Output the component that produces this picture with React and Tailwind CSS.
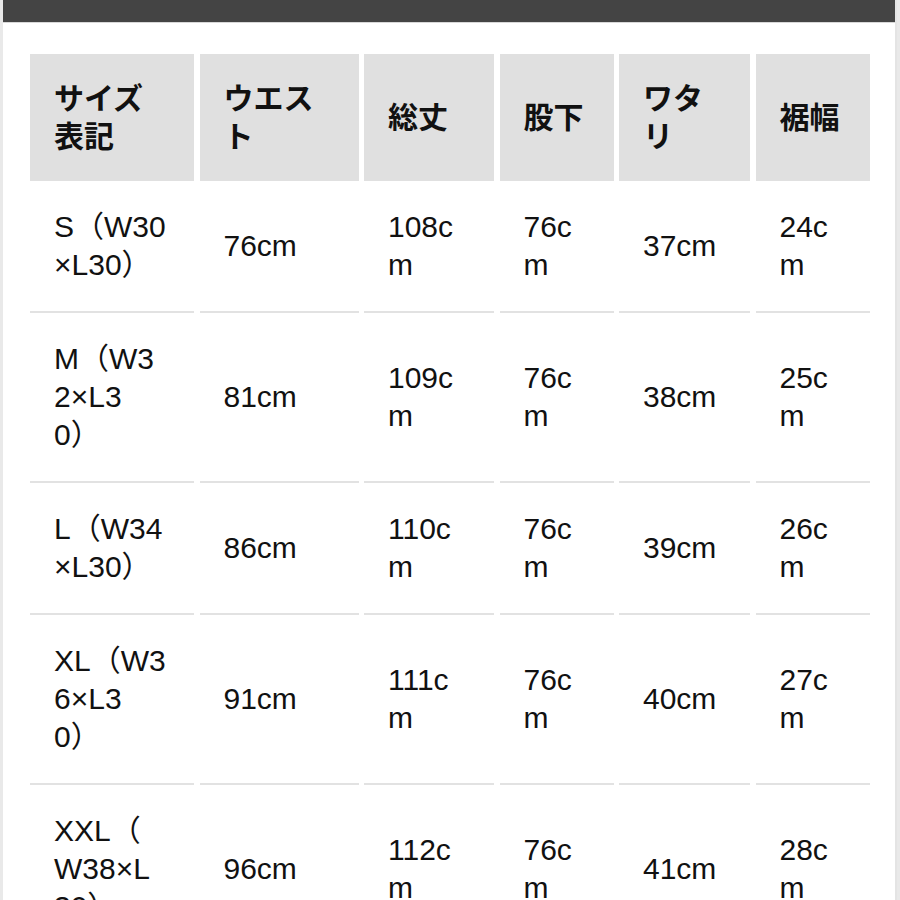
import React from "react";

const widths = ["w-[164px]", "w-[159px]", "w-[130px]", "w-[114px]", "w-[131px]", "w-[114px]"];

const header = [
  ["サイズ", "表記"],
  ["ウエス", "ト"],
  ["総丈"],
  ["股下"],
  ["ワタ", "リ"],
  ["裾幅"],
];

const rows = [
  [["S（W30", "×L30）"], ["76cm"], ["108c", "m"], ["76c", "m"], ["37cm"], ["24c", "m"]],
  [["M（W3", "2×L3", "0）"], ["81cm"], ["109c", "m"], ["76c", "m"], ["38cm"], ["25c", "m"]],
  [["L（W34", "×L30）"], ["86cm"], ["110c", "m"], ["76c", "m"], ["39cm"], ["26c", "m"]],
  [["XL（W3", "6×L3", "0）"], ["91cm"], ["111c", "m"], ["76c", "m"], ["40cm"], ["27c", "m"]],
  [["XXL（", "W38×L", "30）"], ["96cm"], ["112c", "m"], ["76c", "m"], ["41cm"], ["28c", "m"]],
];

function Lines({ lines }) {
  return (
    <div>
      {lines.map((l, i) => (
        <div key={i} className="whitespace-nowrap">
          {l}
        </div>
      ))}
    </div>
  );
}

export default function App() {
  return (
    <div
      className="w-[900px] h-[900px] overflow-hidden bg-[#e9e9e9] pl-[3px] pr-[3px]"
      style={{ fontFamily: '"Liberation Sans", Arial, "Noto Sans CJK JP", sans-serif' }}
    >
      <div className="h-full bg-white border-r-2 border-[#e4e4e4]">
        <div className="h-[23px] bg-[#444444] border-b border-[#d8d8d8]"></div>
        <div className="pl-[27px] pt-[31px]">
          <div className="flex gap-x-[5.5px]">
            {header.map((h, i) => (
              <div
                key={i}
                className={`${widths[i]} shrink-0 bg-[#e0e0e0] pl-[24px] pt-[26px] pb-[25px] flex flex-col justify-center text-[30px] leading-[38px] font-bold text-[#111]`}
              >
                <Lines lines={h} />
              </div>
            ))}
          </div>
          {rows.map((r, ri) => (
            <div key={ri} className="flex gap-x-[5.5px]">
              {r.map((c, ci) => (
                <div
                  key={ci}
                  className={`${widths[ci]} shrink-0 pl-[24px] py-[27px] border-b-2 border-[#e2e2e2] flex flex-col justify-center text-[30px] leading-[38px] text-[#111]`}
                >
                  <Lines lines={c} />
                </div>
              ))}
            </div>
          ))}
        </div>
      </div>
    </div>
  );
}
